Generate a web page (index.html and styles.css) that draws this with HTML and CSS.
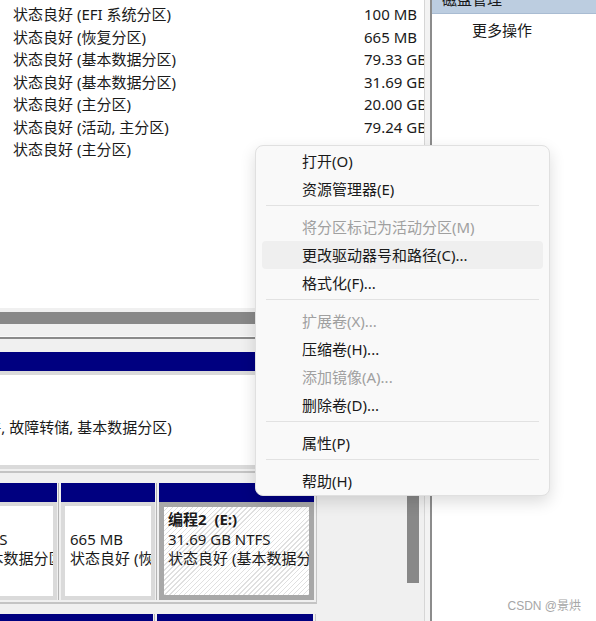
FILE: index.html
```html
<!DOCTYPE html>
<html lang="zh-CN">
<head>
<meta charset="UTF-8">
<meta name="viewport" content="width=device-width, initial-scale=1.0">
<title>磁盘管理</title>
<link rel="stylesheet" href="styles.css">
</head>
<body>
<div id="window">
  <!-- Volume list + graphical view -->
  <div id="mainPane">
    <div id="volumeList">
      <div class="vol-row"><span class="vol-status">状态良好 (EFI 系统分区)</span><span class="vol-size">100 MB</span></div>
      <div class="vol-row"><span class="vol-status">状态良好 (恢复分区)</span><span class="vol-size">665 MB</span></div>
      <div class="vol-row"><span class="vol-status">状态良好 (基本数据分区)</span><span class="vol-size">79.33 GB</span></div>
      <div class="vol-row"><span class="vol-status">状态良好 (基本数据分区)</span><span class="vol-size">31.69 GB</span></div>
      <div class="vol-row"><span class="vol-status">状态良好 (主分区)</span><span class="vol-size">20.00 GB</span></div>
      <div class="vol-row"><span class="vol-status">状态良好 (活动, 主分区)</span><span class="vol-size">79.24 GB</span></div>
      <div class="vol-row"><span class="vol-status">状态良好 (主分区)</span><span class="vol-size">20.00 GB</span></div>
    </div>
    <div class="h-scroll"><div class="h-thumb"></div></div>
    <div class="pane-split"></div>

    <div id="diskView">
      <div class="disk-rows">
        <div class="disk-row scroll-c">
          <div class="part" style="width:486px">
            <div class="part-head"></div>
            <div class="part-box">
              <div class="part-name">Windows (C:)</div>
              <div>100.53 GB NTFS</div>
              <div>状态良好 (启动, 页面文件, 故障转储, 基本数据分区)</div>
            </div>
          </div>
        </div>

        <div class="disk-row scroll-d">
          <div class="part" style="width:161px">
            <div class="part-head"></div>
            <div class="part-box">
              <div class="part-name">&nbsp;</div>
              <div>79.33 GB NTFS</div>
              <div>状态良好 (基本数据分区)</div>
            </div>
          </div>
          <div class="part" style="width:97px">
            <div class="part-head"></div>
            <div class="part-box">
              <div class="part-name">&nbsp;</div>
              <div>665 MB</div>
              <div>状态良好 (恢复分区)</div>
            </div>
          </div>
          <div class="part" style="width:158px">
            <div class="part-head"></div>
            <div class="part-box selected">
              <div class="part-name">编程2&nbsp; (E:)</div>
              <div>31.69 GB NTFS</div>
              <div>状态良好 (基本数据分区)</div>
            </div>
          </div>
        </div>

        <div class="disk-row scroll-d">
          <div class="part" style="width:257px">
            <div class="part-head"></div>
            <div class="part-box"></div>
          </div>
          <div class="part" style="width:159px">
            <div class="part-head"></div>
            <div class="part-box"></div>
          </div>
        </div>
      </div>
      <div class="v-scroll"><div class="v-thumb"></div></div>
    </div>
  </div>

  <div id="paneEdge"></div>
  <div id="paneDivider"></div>

  <!-- Actions pane -->
  <div id="actionsPane">
    <div class="act-head"><span>磁盘管理</span></div>
    <div class="act-item">更多操作</div>
  </div>
</div>

<!-- Context menu -->
<div class="ctx-menu">
  <div class="ctx-item">打开(O)</div>
  <div class="ctx-item">资源管理器(E)</div>
  <div class="ctx-sep"></div>
  <div class="ctx-item disabled">将分区标记为活动分区(M)</div>
  <div class="ctx-item hover">更改驱动器号和路径(C)...</div>
  <div class="ctx-item">格式化(F)...</div>
  <div class="ctx-sep"></div>
  <div class="ctx-item disabled">扩展卷(X)...</div>
  <div class="ctx-item">压缩卷(H)...</div>
  <div class="ctx-item disabled">添加镜像(A)...</div>
  <div class="ctx-item">删除卷(D)...</div>
  <div class="ctx-sep"></div>
  <div class="ctx-item">属性(P)</div>
  <div class="ctx-sep"></div>
  <div class="ctx-item">帮助(H)</div>
</div>

<div class="watermark">CSDN @景烘</div>
</body>
</html>
```

FILE: styles.css
```css
* { box-sizing:border-box; }

html, body { margin:0; padding:0; }

body {
  width:596px; height:621px;
  overflow:hidden;
  position:relative;
  background:#fff;
  color:#1a1a1a;
  font-family:"Noto Sans", "Noto Sans CJK SC", sans-serif;
  font-size:15px;
}

#window { display:flex; height:621px; }

/* Main pane */
#mainPane {
  width:425px; flex:none;
  display:flex; flex-direction:column;
  border-right:1px solid #d6d6d6;
}

/* Volume list */
#volumeList { height:308px; padding-top:3px; background:#fff; overflow:hidden; }
.vol-row { display:flex; height:22.5px; line-height:22.5px; white-space:nowrap; }
.vol-status { flex:none; width:364px; padding-left:13px; }
.vol-size { flex:none; }

.h-scroll { height:28px; padding-top:4px; background:#f0f0f0; }
.h-thumb { width:340px; height:12px; background:#888; }
.pane-split { height:3px; border-top:1px solid #fafafa; background:#8a8a8a; }

/* Graphical disk view */
#diskView { flex:1; display:flex; background:#f0f0f0; overflow:hidden; }
.disk-rows { flex:1; overflow:hidden; padding-top:13px; }

.disk-row {
  display:flex; width:max-content;
  padding:0 2px 2px 0;
  border-right:1px solid #c6c6c6;
  border-bottom:2px solid #c4c4c4;
  margin-bottom:10px;
}
.disk-row.scroll-c { margin-left:-174px; }
.disk-row.scroll-d { margin-left:-104px; }

.part { flex:none; display:flex; flex-direction:column; }
.part + .part { margin-left:1px; border-left:1px solid #b4b4b4; padding-left:2px; }
.part-head { height:19px; background:#000080; }
.part-box {
  height:98px;
  background:#fff;
  border:4px solid #dadada;
  padding:4px 5px;
  line-height:19.5px;
  white-space:nowrap;
  overflow:hidden;
}
.part-box.selected {
  border:5px solid #a8a8a8;
  padding:3px 4px;
  background:repeating-linear-gradient(135deg, #fff 0 2.5px, #e0e0e0 2.5px 3.5px);
}
.part-name { font-weight:700; }

.v-scroll { flex:none; width:20px; padding-left:3px; }
.v-thumb { width:12px; height:153px; margin-top:91px; background:#888; }

#paneEdge { flex:none; width:5px; background:#f3f3f3; }
#paneDivider { flex:none; width:2px; background:#8c8c8c; }

/* Actions pane */
#actionsPane { flex:1; background:#fff; }
.act-head {
  height:14px; overflow:hidden;
  padding-left:10px;
  background:#bccde0;
  border-bottom:1px solid #a9bcd2;
}
.act-head span { display:block; margin-top:-11px; line-height:20px; }
.act-item { margin-top:5px; padding-left:40px; line-height:22px; }

/* Context menu */
.ctx-menu {
  position:absolute; left:255px; top:145px;
  width:295px;
  padding-top:1px;
  background:#f9f9f9;
  border:1px solid #e0e0e0;
  border-radius:8px;
  box-shadow:0 6px 16px rgba(0,0,0,0.14);
}
.ctx-item {
  height:28px; line-height:28px;
  margin:0 6px;
  padding-left:40px;
  border-radius:4px;
  white-space:nowrap;
}
.ctx-item.disabled { color:#a0a0a0; }
.ctx-item.hover { background:#efefef; }
.ctx-sep { height:1px; margin:2px 10px 7px; background:#e2e2e2; }

.watermark {
  position:absolute; right:15px; top:598px;
  font-family:"Liberation Sans", "Noto Sans CJK SC", sans-serif;
  font-size:12px; line-height:16px;
  color:#a6a6a6;
}
```
